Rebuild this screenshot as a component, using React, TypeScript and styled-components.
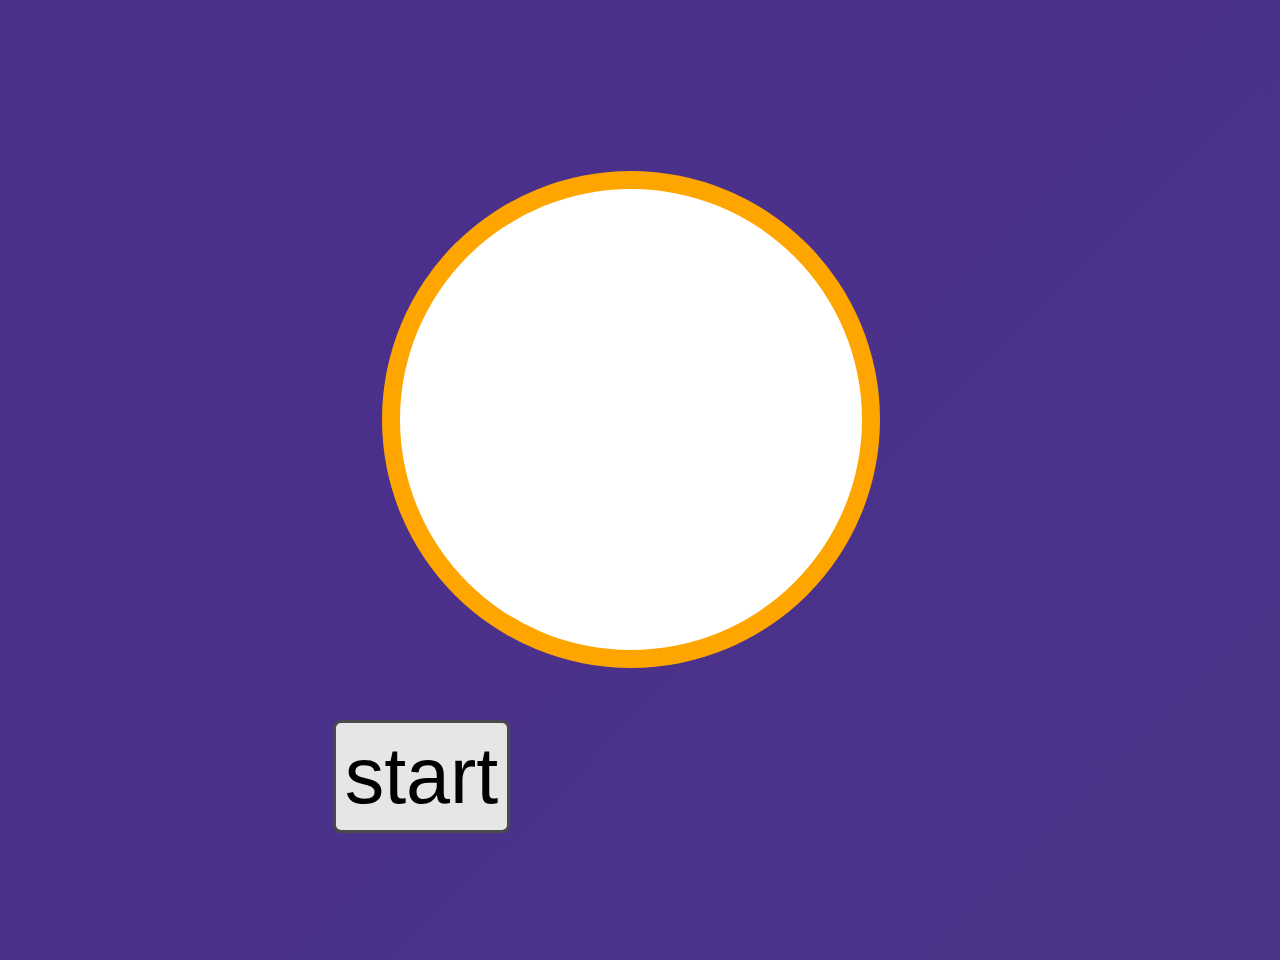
import React from "react";
import styled, { createGlobalStyle } from "styled-components";

const Global = createGlobalStyle`
  html, body { margin: 0; padding: 0; }
  body {
    background: linear-gradient(135deg, #4a2f8b 0%, #4a318a 60%, #4b3389 100%);
    min-height: 960px;
    font-family: "Liberation Sans", Arial, sans-serif;
  }
`;

const Stage = styled.main`
  width: 1280px;
  height: 960px;
  display: flex;
  flex-direction: column;
  align-items: flex-start;
  padding-top: 171px;
  box-sizing: border-box;
`;

const Dial = styled.div`
  width: 498px;
  height: 497px;
  margin-left: 382px;
  box-sizing: border-box;
  border-radius: 50%;
  border: 18px solid #ffa500;
  background: #ffffff;
`;

const StartButton = styled.button`
  margin-top: 52px;
  margin-left: 333px;
  width: 177px;
  height: 113px;
  box-sizing: border-box;
  padding: 0 0 3px;
  border: 3px solid #4a4a4a;
  border-radius: 8px;
  background: #e6e6e6;
  color: #000;
  font-family: "Liberation Sans", Arial, sans-serif;
  font-size: 79px;
  line-height: 1;
  display: flex;
  align-items: center;
  justify-content: center;
  cursor: pointer;
`;

export default function App() {
  return (
    <>
      <Global />
      <Stage>
        <Dial />
        <StartButton>start</StartButton>
      </Stage>
    </>
  );
}
